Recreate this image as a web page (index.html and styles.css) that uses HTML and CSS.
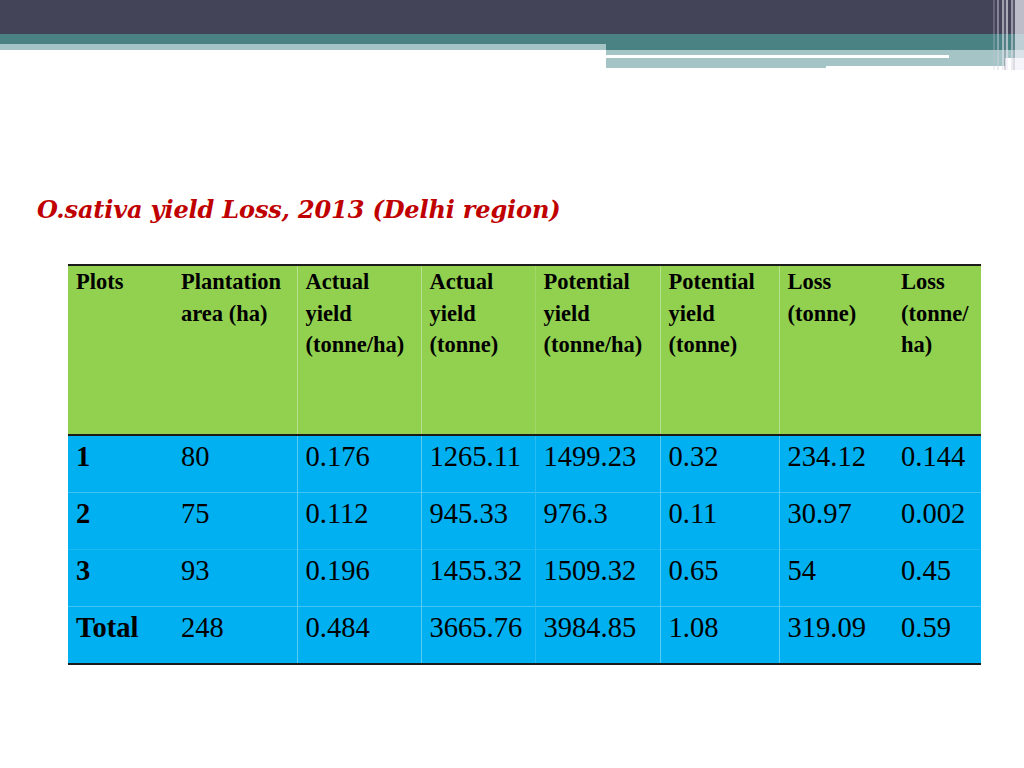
FILE: index.html
```html
<!DOCTYPE html>
<html>
<head>
<meta charset="utf-8">
<link rel="stylesheet" href="styles.css">
</head>
<body>
<header class="deco">
  <div class="deco-dark"></div>
  <div class="deco-bands">
    <div class="band-left">
      <div class="teal teal-left"></div>
      <div class="light light-left"></div>
    </div>
    <div class="band-right">
      <div class="teal teal-right"></div>
      <div class="light light-a"></div>
      <div class="line-row"><div class="white-line"></div><div class="light-fill"></div></div>
      <div class="light light-b"></div>
      <div class="light light-c"></div>
    </div>
  </div>
  <div class="stripes"></div>
</header>
<main class="content">
  <h1 class="title">O.sativa yield Loss, 2013 (Delhi region)</h1>
  <table class="data">
    <colgroup>
      <col class="c1"><col class="c2"><col class="c3"><col class="c4"><col class="c5"><col class="c6"><col class="c7"><col class="c8">
    </colgroup>
    <thead>
      <tr>
        <th>Plots</th>
        <th class="nl">Plantation area (ha)</th>
        <th class="vl">Actual<br>yield<br>(tonne/ha)</th>
        <th class="vl">Actual<br>yield<br>(tonne)</th>
        <th class="vf">Potential<br>yield<br>(tonne/ha)</th>
        <th class="vl">Potential<br>yield<br>(tonne)</th>
        <th class="vl">Loss<br>(tonne)</th>
        <th>Loss<br>(tonne/<br>ha)</th>
      </tr>
    </thead>
    <tbody>
      <tr class="r1">
        <td class="b">1</td><td>80</td><td class="vl">0.176</td><td class="vl">1265.11</td><td class="vf">1499.23</td><td class="vl">0.32</td><td class="vl">234.12</td><td>0.144</td>
      </tr>
      <tr class="r2">
        <td class="b">2</td><td>75</td><td class="vl">0.112</td><td class="vl">945.33</td><td class="vf">976.3</td><td class="vl">0.11</td><td class="vl">30.97</td><td>0.002</td>
      </tr>
      <tr class="r3">
        <td class="b">3</td><td>93</td><td class="vl">0.196</td><td class="vl">1455.32</td><td class="vf">1509.32</td><td class="vl">0.65</td><td class="vl">54</td><td>0.45</td>
      </tr>
      <tr class="r4">
        <td class="b">Total</td><td>248</td><td class="vl">0.484</td><td class="vl">3665.76</td><td class="vf">3984.85</td><td class="vl">1.08</td><td class="vl">319.09</td><td>0.59</td>
      </tr>
    </tbody>
  </table>
</main>
</body>
</html>
```
FILE: styles.css
```css
html, body {
  margin: 0;
  padding: 0;
  background: #ffffff;
}

.deco {
  position: relative;
  height: 70px;
}

.deco-dark {
  height: 34px;
  background: #444459;
}

.deco-bands {
  display: flex;
}

.band-left {
  width: 606px;
}

.band-right {
  flex: 1;
}

.teal {
  background: #4a8284;
}

.light {
  background: #a5c4c6;
}

.teal-left {
  height: 10px;
}

.light-left {
  height: 6px;
}

.teal-right {
  height: 16px;
}

.light-a {
  height: 5px;
}

.line-row {
  display: flex;
  height: 3px;
}

.white-line {
  width: 343px;
  background: #ffffff;
}

.light-fill {
  flex: 1;
  background: #a5c4c6;
}

.light-b {
  height: 8px;
  margin-right: 19px;
}

.light-c {
  height: 2px;
  width: 220px;
}

.stripes {
  position: absolute;
  top: 0;
  right: 0;
  width: 31px;
  height: 70px;
  background:
    linear-gradient(90deg,
      rgba(200,200,215,0.25) 0px, rgba(200,200,215,0.25) 2px,
      rgba(255,255,255,0) 2px, rgba(255,255,255,0) 4px,
      rgba(210,210,225,0.45) 4px, rgba(210,210,225,0.45) 6px,
      rgba(255,255,255,0) 6px, rgba(255,255,255,0) 9px,
      rgba(230,230,240,0.55) 9px, rgba(230,230,240,0.55) 11px,
      rgba(120,120,140,0.3) 11px, rgba(120,120,140,0.3) 13px,
      rgba(235,235,245,0.6) 13px, rgba(235,235,245,0.6) 15px,
      rgba(255,255,255,0) 15px, rgba(255,255,255,0) 18px,
      rgba(220,220,232,0.55) 18px, rgba(220,220,232,0.55) 20px,
      rgba(140,140,160,0.3) 20px, rgba(140,140,160,0.3) 22px,
      rgba(240,240,248,0.7) 22px, rgba(240,240,248,0.7) 31px);
}

.content {
  padding: 0 0 0 37px;
}

.title {
  margin: 125px 0 0 0;
  font-family: "DejaVu Serif", Georgia, serif;
  font-style: italic;
  font-weight: bold;
  font-size: 24px;
  line-height: 30px;
  color: #c00000;
  letter-spacing: -0.15px;
}

.data {
  margin: 39px 0 0 31px;
  border-collapse: collapse;
  table-layout: fixed;
  width: 913px;
  font-family: "Liberation Serif", "Times New Roman", serif;
  color: #000000;
}

.c1 { width: 105px; }
.c2 { width: 124px; }
.c3 { width: 124px; }
.c4 { width: 114px; }
.c5 { width: 125px; }
.c6 { width: 119px; }
.c7 { width: 114px; }
.c8 { width: 88px; }

.data thead tr {
  background: #92d050;
  border-top: 2px solid #1a1a1a;
  border-bottom: 2px solid #1a1a1a;
}

.data th {
  height: 168px;
  padding: 0 2px 0 8px;
  vertical-align: top;
  text-align: left;
  font-weight: bold;
  font-size: 22.5px;
  line-height: 31.5px;
}

.data th.nl {
  padding-right: 0;
}

.data td {
  height: 51px;
  padding: 5px 0 0 8px;
  vertical-align: top;
  font-size: 28.5px;
  line-height: 32px;
  background: #00b0f0;
}

.data td.b {
  font-weight: bold;
}

.data .vl {
  border-left: 1px solid rgba(255, 255, 255, 0.35);
}

.data .vf {
  border-left: 1px solid rgba(255, 255, 255, 0.15);
}

.data tbody tr {
  border-top: 1px solid rgba(255, 255, 255, 0.12);
}

.data tbody tr.r1 {
  border-top: none;
}

.data tbody tr.r2,
.data tbody tr.r4 {
  border-top: 1px solid rgba(255, 255, 255, 0.25);
}

.data tbody tr.r4 {
  border-bottom: 2px solid #1a1a1a;
}
```
